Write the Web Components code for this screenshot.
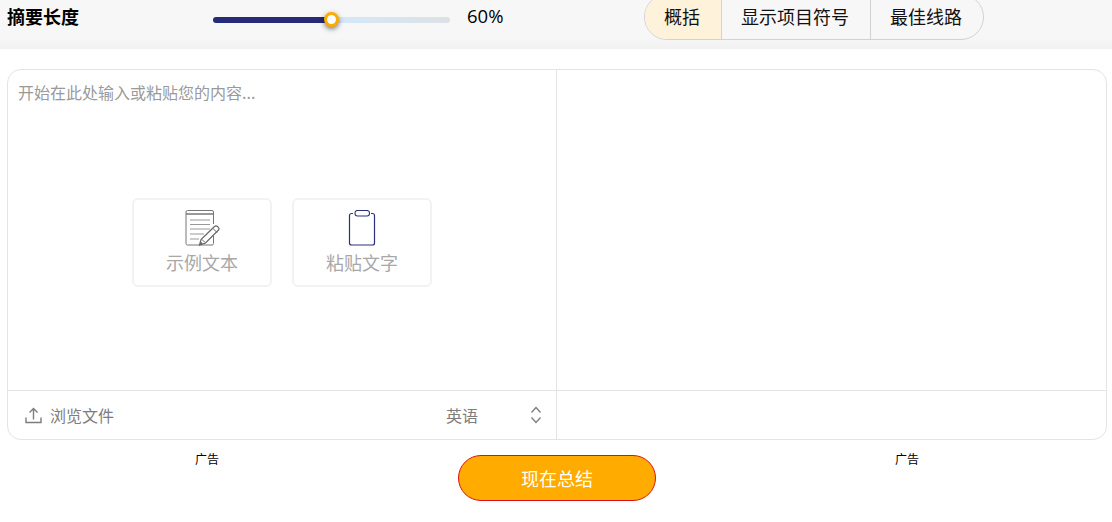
<!DOCTYPE html>
<html lang="zh">
<head>
<meta charset="utf-8">
<title>摘要</title>
<style>
  html, body { margin: 0; padding: 0; background: #fff; overflow: hidden; }
  body { font-family: "Noto Sans CJK SC", "Liberation Sans", sans-serif; }
</style>
</head>
<body>
<top-bar></top-bar>
<editor-panel></editor-panel>
<action-row></action-row>

<script>
class LengthSlider extends HTMLElement {
  constructor() {
    super();
    this.attachShadow({ mode: "open" });
  }
  connectedCallback() {
    this.shadowRoot.innerHTML = `
      <style>
        :host { display: block; width: 237px; height: 6px; position: relative; }
        .track {
          height: 6px;
          border-radius: 3px;
          background: linear-gradient(to right, #262a78 0, #262a78 50%, #d3e9fa 50%, #dde1e4 100%);
        }
        .thumb {
          position: absolute;
          left: 111px;
          top: -5px;
          width: 9px;
          height: 9px;
          border: 3.500px solid #ffab00;
          border-radius: 50%;
          background: #fff;
          box-shadow: 0 2px 5px rgba(0,0,0,.5);
        }
      </style>
      <div class="track"></div>
      <div class="thumb"></div>
    `;
  }
}
customElements.define("length-slider", LengthSlider);

class ModeTabs extends HTMLElement {
  constructor() {
    super();
    this.attachShadow({ mode: "open" });
  }
  connectedCallback() {
    this.shadowRoot.innerHTML = `
      <style>
        :host {
          display: flex;
          width: 340px;
          height: 46px;
          box-sizing: border-box;
          border: 1px solid #d2d2d2;
          border-radius: 26px;
          overflow: hidden;
          font-size: 18px;
          color: #111;
        }
        div {
          display: flex;
          align-items: center;
          justify-content: center;
          box-sizing: border-box;
          padding: 0 2px 2px 0;
        }
        .a { width: 76px; background: #fff2da; }
        .b { width: 149px; border-left: 1px solid #d2d2d2; }
        .c { flex: 1; border-left: 1px solid #d2d2d2; }
      </style>
      <div class="a">概括</div>
      <div class="b">显示项目符号</div>
      <div class="c">最佳线路</div>
    `;
  }
}
customElements.define("mode-tabs", ModeTabs);

class TopBar extends HTMLElement {
  constructor() {
    super();
    this.attachShadow({ mode: "open" });
  }
  connectedCallback() {
    this.shadowRoot.innerHTML = `
      <style>
        :host {
          display: flex;
          align-items: flex-start;
          height: 49px;
          box-sizing: border-box;
          padding-left: 7px;
          background: linear-gradient(to bottom, #f7f7f7 0, #f7f7f7 38px, #f1f1f1 100%);
          overflow: hidden;
          color: #000;
        }
        .label { width: 206px; font-size: 18px; font-weight: 700; line-height: 32px; }
        length-slider { margin-top: 17px; }
        .value { width: 177px; margin-left: 17px; font-size: 18.500px; line-height: 32px; font-family: "Open Sans", "Liberation Sans", sans-serif; }
        mode-tabs { margin-top: -6px; }
      </style>
      <div class="label">摘要长度</div>
      <length-slider></length-slider>
      <div class="value">60%</div>
      <mode-tabs></mode-tabs>
    `;
  }
}
customElements.define("top-bar", TopBar);

class SampleCard extends HTMLElement {
  constructor() {
    super();
    this.attachShadow({ mode: "open" });
  }
  connectedCallback() {
    this.shadowRoot.innerHTML = `
      <style>
        :host {
          display: flex;
          flex-direction: column;
          align-items: center;
          width: 140px;
          height: 89px;
          box-sizing: border-box;
          padding-top: 10px;
          border: 2px solid #f2f2f2;
          border-radius: 6px;
          background: #fff;
          color: #a8a8a8;
          font-size: 18px;
        }
        .icon { height: 36px; display: flex; }
        .text { line-height: 26px; margin-top: 3px; }
      </style>
      <div class="icon"><slot name="icon"></slot></div>
      <div class="text"><slot></slot></div>
    `;
  }
}
customElements.define("sample-card", SampleCard);

class EditorPanel extends HTMLElement {
  constructor() {
    super();
    this.attachShadow({ mode: "open" });
  }
  connectedCallback() {
    this.shadowRoot.innerHTML = `
      <style>
        :host {
          display: grid;
          grid-template-columns: 549px 1fr;
          grid-template-rows: 321px 1fr;
          width: 1100px;
          height: 371px;
          box-sizing: border-box;
          margin: 20px 0 0 7px;
          border: 1px solid #e4e4e4;
          border-radius: 14px;
          background: #fff;
        }
        .input { position: relative; border-right: 1px solid #e4e4e4; border-bottom: 1px solid #e4e4e4; }
        .hint { padding: 9px 0 0 10px; font-size: 16px; line-height: 26px; color: #9a9a9a; }
        .cards { display: flex; gap: 20px; margin: 93px 0 0 124px; }
        .output { border-bottom: 1px solid #e4e4e4; }
        .tools {
          display: flex;
          align-items: center;
          border-right: 1px solid #e4e4e4;
          padding-left: 17px;
          font-size: 16px;
          color: #7d7d7d;
        }
        .browse { margin-left: 8px; width: 396px; }
        .lang { width: 84px; }
      </style>
      <div class="input">
        <div class="hint">开始在此处输入或粘贴您的内容...</div>
        <div class="cards">
          <sample-card>
            <svg slot="icon" width="36" height="36" viewBox="0 0 36 36" fill="none" stroke="#777" stroke-width="1">
              <path d="M29.500 14V2a1.500 1.500 0 0 0-1.500-1.500H3.500A1.500 1.500 0 0 0 2 2v31.500A1.500 1.500 0 0 0 3.500 35H28a1.500 1.500 0 0 0 1.500-1.500V26"/>
              <path d="M2 4h27.500" stroke-width="1.500"/>
              <path d="M6 10h20M6 14.500h20M6 19h20M6 24h14M6 29h9" stroke="#999"/>
              <path d="M15.500 35l1.500-5.500L30.500 16.500a2.200 2.200 0 0 1 3 0l.8.8a2.200 2.200 0 0 1 0 3L21.500 33z" fill="#fff" stroke="#666" stroke-width="1.200"/>
              <path d="M29 18.500l4 4M18 29.500l3 3" stroke="#666"/>
              <path d="M15.500 35l1.300-3.500 2 2z" fill="#666" stroke="none"/>
            </svg>
            示例文本
          </sample-card>
          <sample-card>
            <svg slot="icon" width="30" height="36" viewBox="0 0 30 36" fill="none" stroke="#2c3079" stroke-width="1.200">
              <path d="M6 3.500H4.500a2 2 0 0 0-2 2V33a2 2 0 0 0 2 2h21a2 2 0 0 0 2-2V5.500a2 2 0 0 0-2-2H24"/>
              <rect x="8" y="0.500" width="14.500" height="5.500" rx="2.500" stroke-width="1.100"/>
            </svg>
            粘贴文字
          </sample-card>
        </div>
      </div>
      <div class="output"></div>
      <div class="tools">
        <svg width="17" height="17" viewBox="0 0 17 17" fill="none" stroke="#7d7d7d" stroke-width="1.400">
          <path d="M1 10.500V15.500H16V10.500M8.500 12.500V2M4.500 5.500L8.500 1.500l4 4"/>
        </svg>
        <div class="browse">浏览文件</div>
        <div class="lang">英语</div>
        <svg width="12" height="18" viewBox="0 0 12 18" fill="none" stroke="#7d7d7d" stroke-width="1.300">
          <path d="M1.500 6.500L6 1.500l4.500 5M1.500 11.500L6 16.500l4.500-5"/>
        </svg>
      </div>
      <div></div>
    `;
  }
}
customElements.define("editor-panel", EditorPanel);

class ActionRow extends HTMLElement {
  constructor() {
    super();
    this.attachShadow({ mode: "open" });
  }
  connectedCallback() {
    this.shadowRoot.innerHTML = `
      <style>
        :host {
          display: grid;
          grid-template-columns: 414px 242px 1fr;
          width: 1112px;
          padding-top: 15px;
          box-sizing: border-box;
          font-size: 12px;
          color: #000;
        }
        .ad { line-height: 18px; margin-top: -5px; }
        .left { padding-left: 195px; }
        .right { padding-left: 239px; }
        .go {
          margin-left: 44px;
          width: 198px;
          height: 46px;
          box-sizing: border-box;
          border: 1px solid #d9130f;
          border-radius: 23px;
          background: #ffab00;
          color: #fff;
          font-size: 18px;
          line-height: 44px;
          text-align: center;
        }
      </style>
      <div class="ad left">广告</div>
      <div class="go">现在总结</div>
      <div class="ad right">广告</div>
    `;
  }
}
customElements.define("action-row", ActionRow);
</script>
</body>
</html>
